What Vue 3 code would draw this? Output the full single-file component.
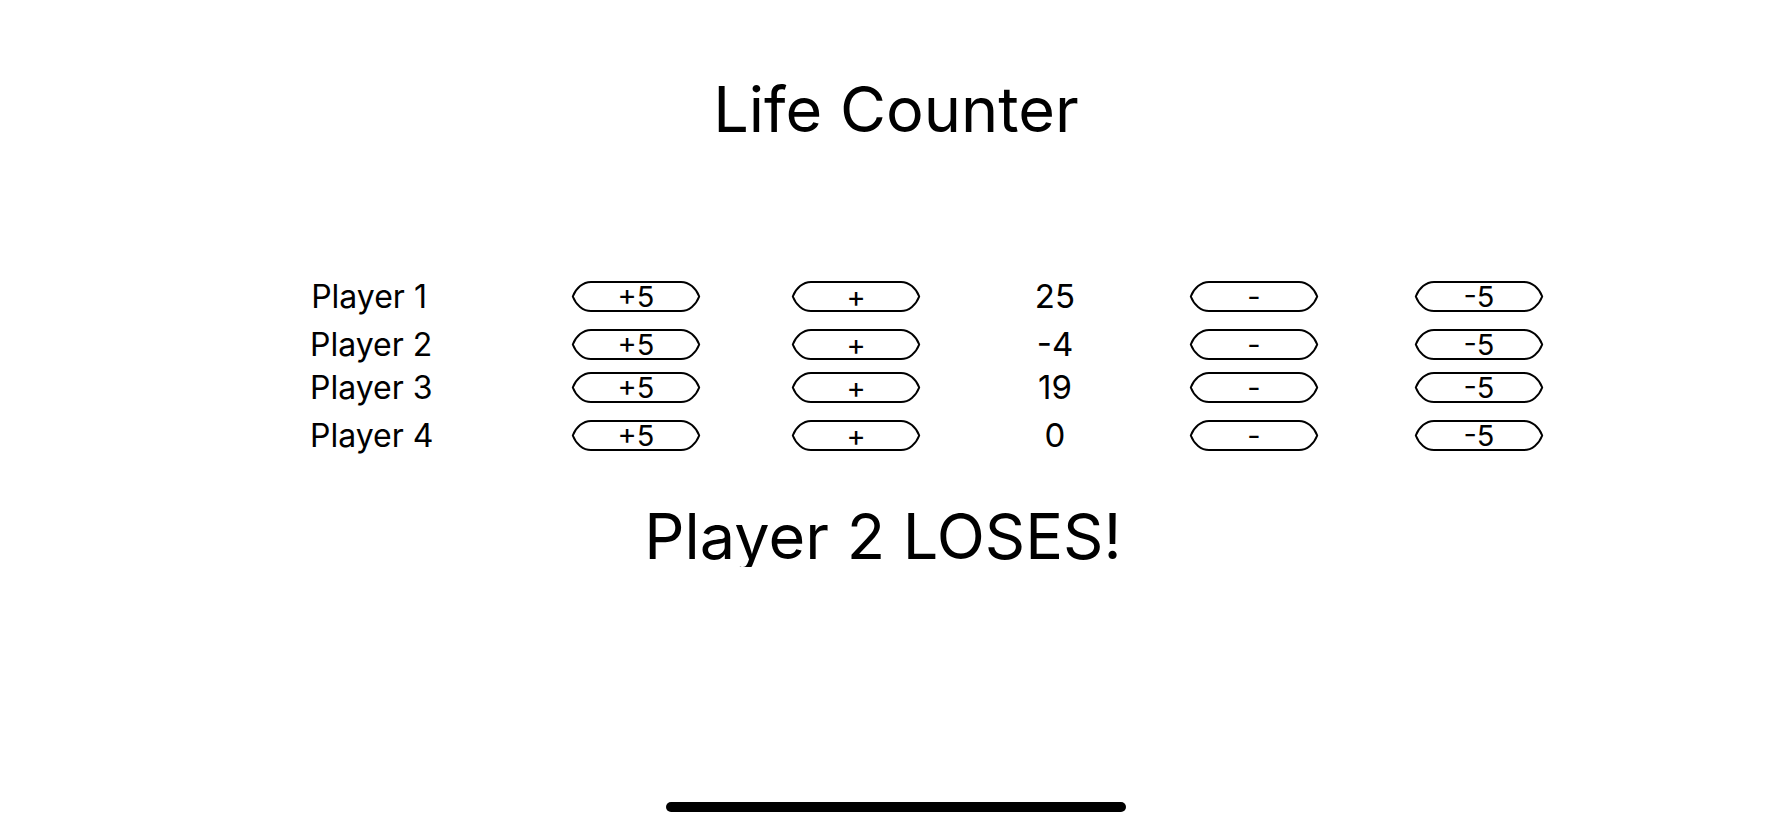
<script setup>
import { computed, ref } from 'vue'

const groups = ref([
  [
    { name: 'Player 1', life: 25 },
    { name: 'Player 2', life: -4 },
  ],
  [
    { name: 'Player 3', life: 19 },
    { name: 'Player 4', life: 0 },
  ],
])

const loser = ref('Player 2')
const message = computed(() => (loser.value ? `${loser.value} LOSES!` : ''))

const raises = [
  { text: '+5', amount: 5 },
  { text: '+', amount: 1 },
]
const drops = [
  { text: '-', amount: -1 },
  { text: '-5', amount: -5 },
]

function change(player, amount) {
  player.life += amount
  if (player.life <= 0) loser.value = player.name
}
</script>

<template>
  <main class="screen">
    <h1 class="title">Life Counter</h1>

    <section class="players">
      <div v-for="(group, index) in groups" :key="index" class="group">
        <div v-for="player in group" :key="player.name" class="row">
          <span class="name">{{ player.name }}</span>
          <button
            v-for="step in raises"
            :key="step.text"
            type="button"
            class="step"
            :aria-label="`${player.name} ${step.text}`"
            @click="change(player, step.amount)"
          >
            <svg class="outline" viewBox="0 0 128 31" aria-hidden="true">
              <path d="M0.8 15.5C4 7 11 1 19 1H109C117 1 124 7 127.2 15.5C124 24 117 30 109 30H19C11 30 4 24 0.8 15.5Z" />
            </svg>
            <span>{{ step.text }}</span>
          </button>
          <output class="life">{{ player.life }}</output>
          <button
            v-for="step in drops"
            :key="step.text"
            type="button"
            class="step"
            :aria-label="`${player.name} ${step.text}`"
            @click="change(player, step.amount)"
          >
            <svg class="outline" viewBox="0 0 128 31" aria-hidden="true">
              <path d="M0.8 15.5C4 7 11 1 19 1H109C117 1 124 7 127.2 15.5C124 24 117 30 109 30H19C11 30 4 24 0.8 15.5Z" />
            </svg>
            <span>{{ step.text }}</span>
          </button>
        </div>
      </div>
    </section>

    <p class="message" role="status">{{ message }}</p>
    <div class="home-bar"></div>
  </main>
</template>

<style>
body {
  background: #fff;
}
</style>

<style scoped>
.screen {
  box-sizing: border-box;
  min-height: 100vh;
  padding: 69px 0 16px;
  display: flex;
  flex-direction: column;
  font-family: Inter, "Liberation Sans", sans-serif;
  color: #000;
}

.title,
.message {
  margin: 0;
  font-size: 63px;
  font-weight: 400;
  line-height: 80px;
  text-align: center;
}

.players {
  display: flex;
  flex-direction: column;
  gap: 12px;
  margin-top: 132px;
  padding: 0 13.9% 0 17.3%;
}

.group {
  display: flex;
  flex-direction: column;
  gap: 17px;
}

.row {
  display: grid;
  grid-template-columns: 262fr 220fr 128fr 270fr 225fr 128fr;
  align-items: center;
  height: 31px;
}

.name {
  width: 118px;
  font-size: 32px;
  line-height: 31px;
  text-align: center;
  white-space: nowrap;
}

.life {
  font-size: 33px;
  line-height: 31px;
  text-align: center;
}

.step {
  position: relative;
  width: 128px;
  height: 31px;
  padding: 1px 0 0;
  border: 0;
  background: none;
  color: inherit;
  font: inherit;
  font-size: 29px;
  line-height: 30px;
  text-align: center;
  cursor: pointer;
}

.outline {
  position: absolute;
  inset: 0;
  width: 100%;
  height: 100%;
  overflow: visible;
  fill: none;
  stroke: #000;
  stroke-width: 2;
  stroke-linejoin: round;
}

.message {
  height: 64px;
  margin-top: 52px;
  padding-right: 26px;
  line-height: 66px;
  overflow: hidden;
}

.home-bar {
  width: 25.7%;
  height: 10px;
  margin: auto auto 0;
  border-radius: 5px;
  background: #000;
}
</style>
